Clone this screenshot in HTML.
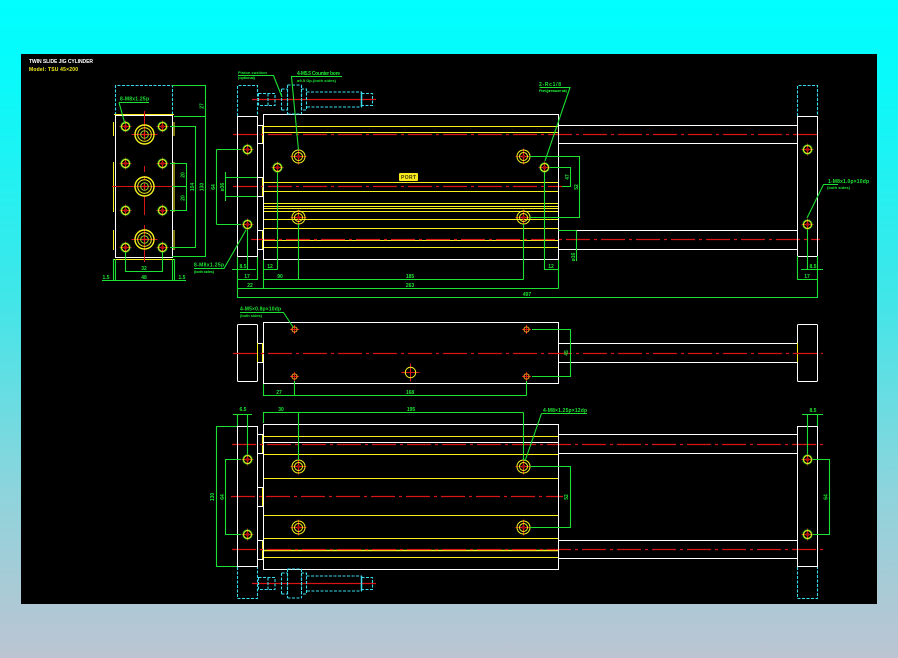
<!DOCTYPE html>
<html><head><meta charset="utf-8"><title>Twin Slide Jig Cylinder</title>
<style>
html,body{margin:0;padding:0}
body{width:898px;height:658px;overflow:hidden;background:linear-gradient(#00ffff 0%,#06fbfb 10%,#40e6e8 45%,#8ed4dc 75%,#bcc4d2 100%);position:relative}
svg{position:absolute;left:21px;top:54px}
text{font-family:"Liberation Sans",sans-serif;font-size:5px;font-weight:bold;fill:#1ce632}
.w{stroke:#fff;fill:none}.y{stroke:#f5f01e;fill:none}.g{stroke:#1ce032;fill:none;stroke-width:1.1}
.c{stroke:#3adcec;fill:none;stroke-width:1.1;stroke-dasharray:3 1.5}
.r{stroke:#d81414;fill:none;stroke-width:1.2;stroke-dasharray:24 4 3 4}
.rs{stroke:#d81414;fill:none}
</style></head><body>
<svg width="856" height="550" viewBox="21 54 856 550">
<defs>
<g id="H"><path class="rs" d="M-8 0H8M0-8V8"/><circle r="6.5" class="y"/><circle r="4" class="y"/><path d="M-2.5 0H2.5M0-2.5V2.5" stroke="#f01c1c" stroke-width="1.2"/><circle r="1.6" fill="#a01010"/></g>
<g id="S"><path class="rs" d="M-6 0H6M0-6V6"/><circle r="4" class="y" stroke-width="1.2"/><circle r="1.8" fill="#b01212"/><circle r="4.8" stroke="#1ce032" stroke-opacity=".5" fill="none"/></g>
<g id="T"><path class="rs" d="M-4.5 0H4.5M0-4.5V4.5"/><circle r="2.6" stroke="#f0a020" fill="none"/></g>
<g id="B"><path class="rs" d="M-13 0H13"/><circle r="9.5" stroke="#f5f01e" stroke-width="1.4" fill="none"/><circle r="6.8" class="y"/><circle r="3.8" stroke="#8ed42e" fill="none"/><path d="M-3 0H3M0-3V3" stroke="#f01c1c" stroke-width="1.2"/></g>
<g id="Bolt"><path class="rs" d="M-1 0H123" stroke-width="1.2"/>
<path class="c" d="M5.5-6V6H22V-6ZM15-6V6M28.5-10.5V10.5M34.5-10.5V10.5M28.5-10.5H34.5M28.5 10.5H34.5M48.5-10.5V10.5H53.5V-10.5H48.5M53.5-7.5H108.5V7.5H53.5M108.5-6H119.5V6H108.5"/>
<path d="M108.5-7.5V7.5" stroke="#3adcec" stroke-width="1.5"/>
<path class="c" d="M34.5-14.5H48.5M34.5 14.5H48.5M34.5-14.5V14.5M48.5-14.5V14.5"/>
</g>
</defs>
<rect x="21" y="54" width="856" height="550" fill="#000"/>

<!-- title -->
<text x="29" y="63" textLength="64" style="fill:#fff;font-size:5px">TWIN SLIDE JIG CYLINDER</text>
<text x="29" y="71" textLength="49" style="fill:#f5f01e;font-size:5px">Model: TSU 45×200</text>

<!-- side view -->
<rect x="115.5" y="115.5" width="57" height="142" class="w"/>
<path class="c" d="M115.5 115V85.5H172.5V115"/>
<path class="y" d="M114 114.5H174M114 259.5H174M113.5 122V136M113.5 162V212M113.5 230V250M174 122V136M174 162V212M174 230V250"/>
<path class="rs" d="M144.5 111V140M144.5 166V172M144.5 176V180M144.5 196V215M144.5 225V262M112 186.5H176"/>
<use href="#B" x="144.5" y="134.5"/><use href="#B" x="144.5" y="186.5"/><use href="#B" x="144.5" y="239.5"/>
<use href="#S" x="125.5" y="126.5"/><use href="#S" x="162.5" y="126.5"/><use href="#S" x="125.5" y="163.5"/><use href="#S" x="162.5" y="163.5"/><use href="#S" x="125.5" y="210.5"/><use href="#S" x="162.5" y="210.5"/><use href="#S" x="125.5" y="247.5"/><use href="#S" x="162.5" y="247.5"/>
<path class="g" d="M172 85.5H205.5V256.5H172M174 116.5H205.5M170 126.5H195.5V247.5H170M170 163.5H186.5V210.5H170M172 186.5H186.5M125.5 252V271.5H162.5V252M113.5 259V281M115.5 259V281M172.5 259V281M174.5 259V281M102 280.5H186M119 102.5H149M119 102.5L125 124"/>
<text x="120" y="100.5" textLength="29">8-M8x1.25p</text>
<text transform="translate(203.5 106) rotate(-90)" text-anchor="middle">27</text>
<text transform="translate(203.5 187) rotate(-90)" text-anchor="middle">130</text>
<text transform="translate(194 187) rotate(-90)" text-anchor="middle">104</text>
<text transform="translate(184.5 175) rotate(-90)" text-anchor="middle">20</text>
<text transform="translate(184.5 198) rotate(-90)" text-anchor="middle">20</text>
<text x="144" y="270" text-anchor="middle">32</text>
<text x="144" y="279" text-anchor="middle">48</text>
<text x="106" y="279" text-anchor="middle">1.5</text>
<text x="182" y="279" text-anchor="middle">1.5</text>

<!-- top view -->
<path class="y" d="M263 126.5H558M263 132.5H558M263 182.5H558M263 191.5H558M263 203.5H558M263 206.5H558M263 208.5H558M263 211.5H558M263 219.5H558M263 228.5H558M263 240.5H558M263 247.5H558M262.5 125V143M262.5 177V197M262.5 230V249M797.5 125V143M797.5 230V249"/>
<path class="r" d="M233 134.5H820M233 186.5H563"/>
<path class="r" d="M251 239.5H820"/>
<rect x="263.5" y="114.5" width="295" height="145" class="w"/>
<rect x="237.5" y="116.5" width="20" height="140" class="w"/>
<rect x="797.5" y="116.5" width="20" height="140" class="w"/>
<path class="c" d="M237.5 116V85.5H257.5V116M797.5 116V85.5H817.5V116"/>
<path class="w" d="M257 125.5H263M257 143.5H263M257 177.5H263M257 196.5H263M257 230.5H263M257 249.5H263M558 125.5H797.5M558 143.5H797.5M558 230.5H797.5M558 249.5H797.5"/>
<use href="#Bolt" transform="translate(253 99.5)"/>
<use href="#H" x="298.5" y="156.5"/><use href="#H" x="523.5" y="156.5"/><use href="#H" x="298.5" y="217.5"/><use href="#H" x="523.5" y="217.5"/>
<use href="#S" x="277.5" y="167.5"/><use href="#S" x="544.5" y="167.5"/><use href="#S" x="247.5" y="149.5"/><use href="#S" x="247.5" y="224.5"/><use href="#S" x="807.5" y="149.5"/><use href="#S" x="807.5" y="224.5"/>
<rect x="399" y="173" width="19" height="8" rx="1" fill="#f5e81e"/>
<text x="401" y="179" textLength="15" style="fill:#403400;font-size:5px">PORT</text>
<path class="g" d="M216.5 149.5H241M216.5 224.5H241M216.5 149.5V224.5M225.5 172V201M225.5 177.5H257M225.5 196.5H257M237.5 257V298M247.5 230V269.5M257.5 257V280M263.5 260V289M232 269.5H256M237.5 279.5H257.5M237.5 288.5H558.5M237.5 297.5H817.5M277.5 172V269.5M263.5 269.5H277.5M298.5 224V279.5M263.5 279.5H523.5M523.5 224V279.5M544.5 172V269.5H558.5M558.5 260V288.5M529 156.5H579.5V217.5H529M550 167.5H570.5V186.5H562M558.5 230.5H576.5M576.5 230.5V261M797.5 256V280M817.5 256V298M807.5 230V269.5M797.5 279.5H817.5M801 269.5H823"/>
<path class="g" d="M545 161L570 87.5H539.5M298.5 150L291.5 76.5H342M238 75.5H273.5L282 97M246 230L224 268.5H194M807 218L823.5 184.5H838"/>
<text x="297" y="75" textLength="43">4-M5.5 Counter bore</text>
<text x="297" y="82" textLength="39" style="font-size:4px">ø9.5 Dp.(both sides)</text>
<text x="238" y="74" textLength="29" style="font-size:4px">Piston cushion</text>
<text x="238" y="79" textLength="17" style="font-size:4px">(optional)</text>
<text x="539" y="86" textLength="22">2-Rc1/8</text>
<text x="539" y="92" textLength="28" style="font-size:4px">Port (pressure air)</text>
<text x="194" y="266.5" textLength="30">8-M8x1.25p</text>
<text x="194" y="273" textLength="20" style="font-size:4px">(both sides)</text>
<text x="828" y="183" textLength="41">1-M8x1.0p×10dp</text>
<text x="827" y="189" textLength="23" style="font-size:4px">(both sides)</text>
<text x="243" y="268" text-anchor="middle">8.5</text>
<text x="247" y="278" text-anchor="middle">17</text>
<text x="250" y="287" text-anchor="middle">22</text>
<text x="270" y="268" text-anchor="middle">12</text>
<text x="280" y="278" text-anchor="middle">90</text>
<text x="410" y="278" text-anchor="middle">185</text>
<text x="410" y="287" text-anchor="middle">263</text>
<text x="527" y="296" text-anchor="middle">497</text>
<text x="551" y="268" text-anchor="middle">12</text>
<text x="813" y="268" text-anchor="middle">8.5</text>
<text x="807" y="278" text-anchor="middle">17</text>
<text transform="translate(215 187) rotate(-90)" text-anchor="middle">64</text>
<text transform="translate(224 187) rotate(-90)" text-anchor="middle">ø36</text>
<text transform="translate(569 177) rotate(-90)" text-anchor="middle">47</text>
<text transform="translate(578 187) rotate(-90)" text-anchor="middle">52</text>
<text transform="translate(575 257) rotate(-90)" text-anchor="middle">ø16</text>

<!-- middle view -->
<rect x="263.5" y="322.5" width="295" height="61" class="w"/>
<rect x="237.5" y="324.5" width="20" height="57" rx="1" class="w"/>
<rect x="797.5" y="324.5" width="20" height="57" rx="1" class="w"/>
<path class="w" d="M257 343.5H263M257 362.5H263M558 343.5H797.5M558 362.5H797.5"/>
<path class="y" d="M257.5 343V362M262.5 343V362M797.5 343V362"/>
<path class="r" d="M233 353.5H823"/>
<use href="#T" x="294.5" y="329.5"/><use href="#T" x="526.5" y="329.5"/><use href="#T" x="294.5" y="376.5"/><use href="#T" x="526.5" y="376.5"/>
<g transform="translate(410.5 372.5)"><path class="rs" d="M-9 0H9M0-9V9"/><circle r="5.2" class="y"/></g>
<path class="g" d="M263.5 384V395.5H526.5M294.5 381V395.5M526.5 381V395.5M532 329.5H570.5V376.5H532M240 312.5H283.5L293 327"/>
<text x="240" y="310.5" textLength="41">4-M5×0.8p×10dp</text>
<text x="240" y="317" textLength="22" style="font-size:4px">(both sides)</text>
<text x="279" y="394" text-anchor="middle">27</text>
<text x="410" y="394" text-anchor="middle">168</text>
<text transform="translate(568 353) rotate(-90)" text-anchor="middle">45</text>

<!-- bottom view -->
<path class="y" d="M263 436.5H558M263 454.5H558M263 478.5H558M263 515.5H558M263 538.5H558M263 557.5H558M262.5 434V453M262.5 487V506M262.5 540V559M257.5 434V453M257.5 540V559M797.5 434V453M797.5 540V559"/>
<path d="M263 550.5H558" stroke="#f5f01e" stroke-width="1.4"/>
<path class="w" d="M263 442.5H558"/>
<path class="r" d="M232 444.5H824M231 496.5H563M232 549.5H824"/>
<rect x="263.5" y="424.5" width="295" height="145" class="w"/>
<rect x="237.5" y="426.5" width="20" height="140" class="w"/>
<rect x="797.5" y="426.5" width="20" height="140" class="w"/>
<path class="w" d="M257 434.5H263M257 453.5H263M257 487.5H263M257 506.5H263M257 540.5H263M257 559.5H263M558 434.5H797.5M558 453.5H797.5M558 540.5H797.5M558 558.5H797.5"/>
<path class="c" d="M237.5 567V598.5H257.5V567M797.5 567V598.5H817.5V567"/>
<use href="#Bolt" transform="translate(253 583.5)"/>
<use href="#H" x="298.5" y="466.5"/><use href="#H" x="523.5" y="466.5"/><use href="#H" x="298.5" y="527.5"/><use href="#H" x="523.5" y="527.5"/>
<use href="#S" x="247.5" y="459.5"/><use href="#S" x="247.5" y="534.5"/><use href="#S" x="807.5" y="459.5"/><use href="#S" x="807.5" y="534.5"/>
<path class="g" d="M237 426.5H216.5V566.5H237M241 459.5H225.5V534.5H241M233 414.5H252M237.5 414.5V426M247.5 414.5V454M263.5 423V412.5H523.5M298.5 412.5V460M523.5 412.5V460M530 466.5H570.5V527.5H530M541.5 413.5H587M541.5 413.5L525 461M802 414.5H823M807.5 414.5V454M817.5 414.5V426M813 459.5H829.5V534.5H813"/>
<text x="243" y="411" text-anchor="middle">6.5</text>
<text x="281" y="411" text-anchor="middle">30</text>
<text x="411" y="411" text-anchor="middle">195</text>
<text x="543" y="412" textLength="44">4-M8×1.25p×12dp</text>
<text x="813" y="412" text-anchor="middle">8.5</text>
<text transform="translate(214 497) rotate(-90)" text-anchor="middle">130</text>
<text transform="translate(224 497) rotate(-90)" text-anchor="middle">64</text>
<text transform="translate(568 497) rotate(-90)" text-anchor="middle">52</text>
<text transform="translate(827.5 497) rotate(-90)" text-anchor="middle">64</text>
</svg>
</body></html>
